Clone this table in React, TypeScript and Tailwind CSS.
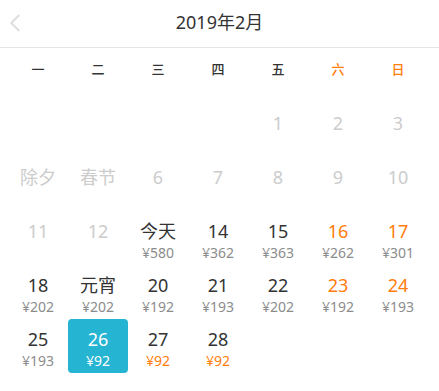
import { ChevronLeft } from 'lucide-react'

type Day = {
  label?: string
  price?: string
  tone?: 'off' | 'dark' | 'weekend' | 'selected'
  cheap?: boolean
}

const weekdays = ['一', '二', '三', '四', '五', '六', '日']

const days: Day[] = [
  {}, {}, {}, {},
  { label: '1', tone: 'off' },
  { label: '2', tone: 'off' },
  { label: '3', tone: 'off' },
  { label: '除夕', tone: 'off' },
  { label: '春节', tone: 'off' },
  { label: '6', tone: 'off' },
  { label: '7', tone: 'off' },
  { label: '8', tone: 'off' },
  { label: '9', tone: 'off' },
  { label: '10', tone: 'off' },
  { label: '11', tone: 'off' },
  { label: '12', tone: 'off' },
  { label: '今天', price: '¥580', tone: 'dark' },
  { label: '14', price: '¥362', tone: 'dark' },
  { label: '15', price: '¥363', tone: 'dark' },
  { label: '16', price: '¥262', tone: 'weekend' },
  { label: '17', price: '¥301', tone: 'weekend' },
  { label: '18', price: '¥202', tone: 'dark' },
  { label: '元宵', price: '¥202', tone: 'dark' },
  { label: '20', price: '¥192', tone: 'dark' },
  { label: '21', price: '¥193', tone: 'dark' },
  { label: '22', price: '¥202', tone: 'dark' },
  { label: '23', price: '¥192', tone: 'weekend' },
  { label: '24', price: '¥193', tone: 'weekend' },
  { label: '25', price: '¥193', tone: 'dark' },
  { label: '26', price: '¥92', tone: 'selected' },
  { label: '27', price: '¥92', tone: 'dark', cheap: true },
  { label: '28', price: '¥92', tone: 'dark', cheap: true },
]

function DayCell({ day }: { day: Day }) {
  const selected = day.tone === 'selected'
  const labelColor =
    day.tone === 'off'
      ? 'text-[#cccccc]'
      : day.tone === 'weekend'
        ? 'text-[#ff7d0c]'
        : selected
          ? 'text-white'
          : 'text-[#333333]'
  const priceColor = selected
    ? 'text-white'
    : day.cheap
      ? 'text-[#ff7d0c]'
      : 'text-[#8c8c8c]'

  return (
    <div
      className={`h-[54px] flex flex-col items-center pt-[7px] ${
        selected ? 'bg-[#25b4d2] rounded-[4px]' : ''
      }`}
    >
      {day.label && (
        <span className={`text-[18px] leading-[27px] ${labelColor}`}>
          {day.label}
        </span>
      )}
      {day.price && (
        <span className={`text-[14px] leading-[15px] ${priceColor}`}>
          {day.price}
        </span>
      )}
    </div>
  )
}

export default function App() {
  return (
    <div
      className="w-[439px] h-[391px] bg-white overflow-hidden"
      style={{ fontFamily: '"Noto Sans", "Noto Sans CJK SC", sans-serif' }}
    >
      <div className="relative h-[48px] border-b border-[#e5e5e5] flex items-center justify-center">
        <ChevronLeft
          className="absolute left-0 top-[8px] text-[#dddddd]"
          size={30}
          strokeWidth={1.5}
        />
        <span className="text-[18px] text-[#333333] -mt-[2px]">2019年2月</span>
      </div>

      <div className="pl-2 w-[428px]">
        <div className="grid grid-cols-7 h-[55px] items-start pt-[12px]">
          {weekdays.map((w, i) => (
            <div
              key={w}
              className={`text-center text-[13px] leading-[18px] font-medium ${
                i >= 5 ? 'text-[#ff7d0c]' : 'text-[#333333]'
              }`}
            >
              {w}
            </div>
          ))}
        </div>

        <div className="grid grid-cols-7">
          {days.map((d, i) => (
            <DayCell key={i} day={d} />
          ))}
        </div>
      </div>
    </div>
  )
}
